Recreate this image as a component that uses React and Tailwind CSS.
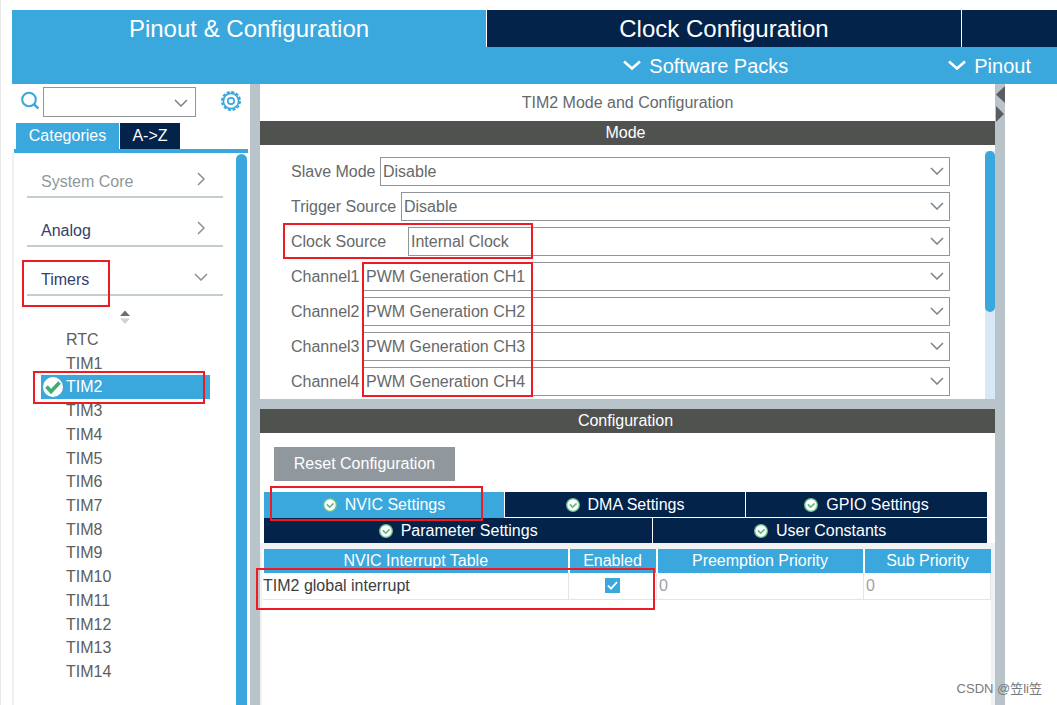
import { useState } from "react";

const timers = [
  "RTC",
  "TIM1",
  "TIM2",
  "TIM3",
  "TIM4",
  "TIM5",
  "TIM6",
  "TIM7",
  "TIM8",
  "TIM9",
  "TIM10",
  "TIM11",
  "TIM12",
  "TIM13",
  "TIM14",
];

const modes = [
  { id: "slave", label: "Slave Mode", value: "Disable", width: "w-[89px]" },
  { id: "trigger", label: "Trigger Source", value: "Disable", width: "w-[110px]" },
  { id: "clock", label: "Clock Source", value: "Internal Clock", width: "w-[117px]" },
  { id: "ch1", label: "Channel1", value: "PWM Generation CH1", width: "w-[72px]" },
  { id: "ch2", label: "Channel2", value: "PWM Generation CH2", width: "w-[72px]" },
  { id: "ch3", label: "Channel3", value: "PWM Generation CH3", width: "w-[72px]" },
  { id: "ch4", label: "Channel4", value: "PWM Generation CH4", width: "w-[72px]" },
];

const Chevron = ({ className, d = "M1 1l6 6 6-6", box = "0 0 14 8", width = 1.5 }) => (
  <svg className={className} viewBox={box} fill="none" stroke="currentColor" strokeWidth={width}>
    <path d={d} />
  </svg>
);

const GearIcon = () => (
  <svg className="size-[22px]" viewBox="0 0 22 22" fill="none" stroke="currentColor">
    {/* teeth */}
    <circle cx="11" cy="11" r="9" strokeWidth="2" strokeDasharray="3.1 1.612" />
    <circle cx="11" cy="11" r="7.6" strokeWidth="1.6" />
    <circle cx="11" cy="11" r="3.2" strokeWidth="1.7" />
  </svg>
);

const StatusIcon = () => (
  <svg className="size-3.5 shrink-0" viewBox="0 0 14 14" fill="none">
    <circle cx="7" cy="7" r="6.3" fill="#fff" stroke="#6cc08b" strokeWidth="1.3" />
    <path d="M3.8 6.4l2.9 2.8 3.9-3.8" stroke="#5fb981" strokeWidth="1.6" />
  </svg>
);

// Red annotation frame laid over the panels
const Mark = ({ className }) => (
  <div className={`pointer-events-none absolute z-10 border-2 border-[#ed1c24] ${className}`} />
);

const Header = () => {
  return (
    <header className="bg-[#3aa8dc] text-white">
      <nav className="grid grid-cols-[5fr_5fr_1fr] h-[37px] text-2xl">
        <button className="border-r border-white">Pinout &amp; Configuration</button>
        <button className="border-r border-white bg-[#03234b]">Clock Configuration</button>
        <button className="bg-[#03234b]" aria-label="Project Manager" />
      </nav>
      <div className="flex h-[37px] items-center justify-end gap-40 pr-[26px] text-xl">
        <button className="flex items-center gap-2">
          <Chevron className="h-[11px] w-[18px]" d="M1 1.5l8 7 8-7" box="0 0 18 11" width={2.6} />
          Software Packs
        </button>
        <button className="flex items-center gap-2">
          <Chevron className="h-[11px] w-[18px]" d="M1 1.5l8 7 8-7" box="0 0 18 11" width={2.6} />
          Pinout
        </button>
      </div>
    </header>
  );
};

const Category = ({ name, open, className }) => (
  <button
    className={`flex h-10 items-center justify-between border-b-2 border-[#c3ccd1] pt-2.5 pl-3.5 ${className}`}
  >
    {name}
    <span className="mr-3.5 mb-1.5 flex w-4 justify-center text-[#8a8f93]">
      {open ? (
        <Chevron className="h-2 w-3.5" />
      ) : (
        <Chevron className="h-3.5 w-2" d="M1 1l6 6-6 6" box="0 0 8 14" />
      )}
    </span>
  </button>
);

const Sidebar = () => {
  const [selected, setSelected] = useState("TIM2");

  return (
    <aside className="relative flex w-[238px] shrink-0 flex-col">
      <div className="flex h-[39px] items-start pt-[3px] text-[#3aa8dc]">
        <svg className="mt-1 ml-2 size-5" viewBox="0 0 20 20" fill="none" stroke="currentColor">
          <circle cx="9" cy="8.5" r="6.8" strokeWidth="2.1" />
          <path d="M13.8 13.2l4.6 4.3" strokeWidth="2.4" />
        </svg>
        <div className="relative ml-[3px] h-[30px] w-[153px]">
          <select
            aria-label="Search"
            className="size-full appearance-none border border-[#8f979d] bg-white"
          />
          <Chevron className="pointer-events-none absolute top-3 right-2 h-2 w-3.5 text-[#7d8286]" />
        </div>
        <button className="mt-[3px] ml-6" aria-label="Settings">
          <GearIcon />
        </button>
      </div>

      <div className="ml-1 flex h-[26px] gap-px text-white">
        <button className="w-[103px] bg-[#3aa8dc]">Categories</button>
        <button className="w-[60px] bg-[#03234b]">A-&gt;Z</button>
      </div>
      <div className="mr-0.5 ml-0.5 h-1 bg-[#3aa8dc]" />

      <div className="flex flex-1 justify-between border-l-2 border-[#eef1f3]">
        <div className="ml-[13px] flex w-[196px] flex-col pt-[5px]">
          <div className="flex flex-col gap-[9px]">
            <Category name="System Core" className="text-[#8f979c]" />
            <Category name="Analog" className="text-[#34406c]" />
            <Category name="Timers" open className="text-[#34406c]" />
          </div>
          <div className="flex h-8 justify-center pt-[14px]">
            <svg className="h-[15px] w-2.5" viewBox="0 0 10 15">
              <path d="M5 0.5L10 6H0z" fill="#6b6e70" />
              <path d="M0 8.5h10L5 14z" fill="#cfd1d2" />
            </svg>
          </div>
          <ul className="ml-3.5 grid h-[356px] w-[169px] auto-rows-fr text-[#5c5e60]">
            {timers.map((name) => (
              <li key={name}>
                <button
                  onClick={() => setSelected(name)}
                  className={`flex size-full items-center gap-[3px] pl-0.5 ${
                    name === selected ? "bg-[#3aa8dc] text-white" : ""
                  }`}
                >
                  <span className="w-5">
                    {name === selected && (
                      <svg className="size-5" viewBox="0 0 20 20" fill="none">
                        <circle cx="10" cy="10" r="10" fill="#fff" />
                        <path d="M3.5 9.5l4.5 5 8.5-9" stroke="#3fae6a" strokeWidth="3.6" />
                      </svg>
                    )}
                  </span>
                  {name}
                </button>
              </li>
            ))}
          </ul>
        </div>
        <div className="mt-px mr-[3px] w-[11px] rounded-t-full bg-[#3aa8dc]" />
      </div>

      <Mark className="top-[176px] left-2.5 h-[47px] w-[88px]" />
      <Mark className="top-[287px] left-[21px] h-[33px] w-[172px]" />
    </aside>
  );
};

const ModePanel = () => {
  return (
    <section>
      <h1 className="flex h-[37px] items-center justify-center text-[#66696b]">
        TIM2 Mode and Configuration
      </h1>
      <h2 className="flex h-6 items-center justify-center bg-[#505250] pr-1 text-white">Mode</h2>
      <div className="relative flex h-[254px] justify-between pl-[31px]">
        <form className="mr-[35px] flex flex-1 flex-col gap-1.5 pt-3 text-[#66696b]">
          {modes.map((mode) => (
            <div key={mode.id} className="flex h-[29px] items-center">
              <label htmlFor={mode.id} className={`shrink-0 whitespace-nowrap ${mode.width}`}>
                {mode.label}
              </label>
              <div className="relative h-full flex-1">
                <select
                  id={mode.id}
                  className="size-full appearance-none border border-[#8f979d] bg-white pl-0.5"
                >
                  <option>{mode.value}</option>
                </select>
                <Chevron className="pointer-events-none absolute top-2.5 right-1.5 h-2 w-3.5 text-[#7d8286]" />
              </div>
            </div>
          ))}
        </form>
        <div className="mt-1.5 w-2.5 bg-[#d8e8f6]">
          <div className="h-[161px] rounded-full bg-[#3aa8dc]" />
        </div>
        <Mark className="top-[78px] left-[23px] h-9 w-[250px]" />
        <Mark className="top-[117px] left-[102px] h-[135px] w-[171px]" />
      </div>
    </section>
  );
};

const SettingsTab = ({ name, className }) => (
  <button className={`flex items-center justify-center gap-2 ${className}`}>
    <StatusIcon />
    {name}
  </button>
);

const ConfigurationPanel = () => {
  return (
    <section className="relative flex flex-1 flex-col">
      <h2 className="flex h-6 items-center justify-center bg-[#505250] pr-1 text-white">
        Configuration
      </h2>
      <div className="px-3.5 pt-3.5 pb-[11px]">
        <button className="h-[34px] w-[181px] bg-[#90989e] text-white">Reset Configuration</button>
      </div>
      <div className="ml-1 mr-2 text-white">
        <div className="grid h-[26px] grid-cols-3">
          <SettingsTab name="NVIC Settings" className="border-r border-white bg-[#3aa8dc]" />
          <SettingsTab name="DMA Settings" className="border-r border-b border-white bg-[#03234b]" />
          <SettingsTab name="GPIO Settings" className="border-b border-white bg-[#03234b]" />
        </div>
        <div className="grid h-[25px] grid-cols-[7fr_6fr]">
          <SettingsTab name="Parameter Settings" className="border-r border-white bg-[#03234b]" />
          <SettingsTab name="User Constants" className="bg-[#03234b]" />
        </div>
      </div>

      <div className="flex-1 border-t-[6px] border-r-4 border-l-2 border-[#f0f2f4]">
        <table className="w-full table-fixed border-collapse">
          <colgroup>
            <col />
            <col className="w-[88px]" />
            <col className="w-[207px]" />
            <col className="w-[127px]" />
          </colgroup>
          <thead>
            <tr className="h-6 bg-[#3aa8dc] text-white">
              <th className="border-x-2 border-white p-0 font-normal">NVIC Interrupt Table</th>
              <th className="border-x-2 border-white p-0 font-normal">Enabled</th>
              <th className="border-x-2 border-white p-0 font-normal">Preemption Priority</th>
              <th className="border-l-2 border-white p-0 font-normal">Sub Priority</th>
            </tr>
          </thead>
          <tbody>
            <tr className="h-[26px] border-b border-[#e3e5e7] text-[#a0a3a5]">
              <td className="p-0 text-[#3c3e40]">
                <label htmlFor="tim2-irq">TIM2 global interrupt</label>
              </td>
              <td className="border-x border-[#e3e5e7] p-0">
                <div className="relative mx-auto size-[15px]">
                  <input
                    id="tim2-irq"
                    type="checkbox"
                    defaultChecked
                    className="peer block size-full appearance-none border border-[#3aa8dc] checked:bg-[#3aa8dc]"
                  />
                  <svg
                    className="pointer-events-none absolute inset-0 hidden size-full peer-checked:block"
                    viewBox="0 0 15 15"
                    fill="none"
                  >
                    <path d="M3 7.5l3 3.2 6-6.5" stroke="#fff" strokeWidth="1.8" />
                  </svg>
                </div>
              </td>
              <td className="p-0 pl-0.5">0</td>
              <td className="border-x border-[#e3e5e7] p-0 pl-0.5">0</td>
            </tr>
          </tbody>
        </table>
      </div>

      <Mark className="top-[77px] left-2.5 h-[35px] w-[213px]" />
      <Mark className="top-[159px] -left-1 h-[42px] w-[399px]" />
    </section>
  );
};

const App = () => {
  return (
    <div className="relative flex min-h-screen flex-col border-l border-[#e6e8ea] bg-white pt-2.5 pl-[11px] font-['Liberation_Sans',Arial,sans-serif] text-base leading-5">
      <Header />
      <div className="flex flex-1">
        <Sidebar />
        <div className="w-2.5 shrink-0 bg-[#b8c4ca]" />
        <main className="flex min-w-0 flex-1 flex-col">
          <ModePanel />
          <div className="h-2.5 bg-[#b8c4ca]" />
          <ConfigurationPanel />
        </main>
        <div className="w-2.5 shrink-0 bg-[#b8c4ca] pt-0.5">
          <svg className="h-9 w-2.5" viewBox="0 0 10 36" fill="#5a5c5d">
            <path d="M10 0v17L1 8.5z" />
            <path d="M1 20v16l8-8z" />
          </svg>
        </div>
        <div className="w-[52px] shrink-0" />
      </div>
      <p className="absolute right-[15px] bottom-1.5 font-['Liberation_Sans','Noto_Sans_CJK_SC',sans-serif] text-[13px] text-[#777a7c]">
        CSDN @笠li笠
      </p>
    </div>
  );
};

export default App;
